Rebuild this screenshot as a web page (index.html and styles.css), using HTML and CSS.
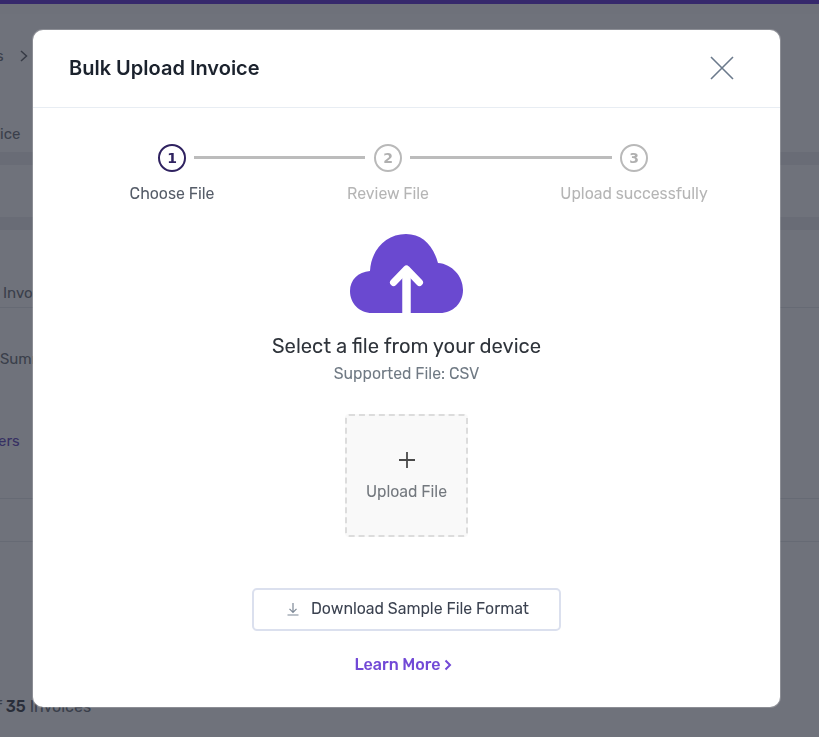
FILE: index.html
```html
<!DOCTYPE html>
<html lang="en">
<head>
<meta charset="utf-8">
<title>Bulk Upload Invoice</title>
<link rel="stylesheet" href="styles.css">
</head>
<body>
<div class="page">
  <div class="topbar"></div>
  <div class="subbar"></div>
  <div class="head-band">
    <div class="crumb"><span>s</span><svg width="8" height="12" viewBox="0 0 8 12" fill="none" stroke="#7d8087" stroke-width="1.500"><path d="M1 1l5.500 5L1 11"/></svg></div>
    <div class="page-title">ice</div>
  </div>
  <div class="gap"></div>
  <div class="card-band"></div>
  <div class="gap"></div>
  <div class="row row-a"><span>Invoices</span></div>
  <div class="row row-b">
    <div class="summary">Summary</div>
    <div class="link">ers</div>
  </div>
  <div class="row row-d"></div>
  <div class="row row-e"><span>f <b>35</b> Invoices</span></div>
</div>

<div class="overlay">
  <section class="modal">
    <header class="modal-head">
      <h1 class="modal-title">Bulk Upload Invoice</h1>
      <svg class="close" width="26" height="26" viewBox="0 0 26 26" fill="none" stroke="#6b7a8c" stroke-width="1.600"><path d="M2 2l22 22M24 2L2 24"/></svg>
    </header>
    <div class="modal-body">
      <div class="steps">
        <div class="step step-active"><span class="num">1</span><span class="label">Choose File</span></div>
        <div class="line line-one"></div>
        <div class="step"><span class="num">2</span><span class="label">Review File</span></div>
        <div class="line line-two"></div>
        <div class="step"><span class="num">3</span><span class="label">Upload successfully</span></div>
      </div>
      <svg class="cloud" width="114" height="80" viewBox="0 0 114 80">
        <path fill="#6a49d0" d="M22 79C9 79 0 69 0 57 0 46 8 38 20 37 21 16 36 0 56 0 72 0 83 11 88 29 102 30 113 42 113 56 113 69 103 79 90 79z"/>
        <path fill="none" stroke="#fff" stroke-width="8.500" d="M56.500 79V38"/>
        <path fill="none" stroke="#fff" stroke-width="7" stroke-linecap="round" stroke-linejoin="round" d="M43.500 48.500L56.500 35l13 13.500"/>
      </svg>
      <h2 class="select-title">Select a file from your device</h2>
      <p class="supported">Supported File: CSV</p>
      <div class="dropzone">
        <svg class="plus" width="16" height="16" viewBox="0 0 16 16" stroke="#4a4a4a" stroke-width="1.800"><path d="M8 0v16M0 8h16"/></svg>
        <span class="drop-label">Upload File</span>
      </div>
      <button class="download" type="button">
        <svg width="14" height="14" viewBox="0 0 14 14" fill="none" stroke="#7d8896" stroke-width="1.200"><path d="M7 1v9M3.500 6.800L7 10.300l3.500-3.500M1.500 13h11"/></svg>
        <span>Download Sample File Format</span>
      </button>
      <a class="learn" href="#">Learn More<svg width="8" height="12" viewBox="0 0 8 12" fill="none" stroke="#7249d6" stroke-width="2"><path d="M1.500 1.500L6 6l-4.500 4.500"/></svg></a>
    </div>
  </section>
</div>
</body>
</html>
```
FILE: styles.css
```css
* { box-sizing: border-box; }
html, body { margin: 0; height: 100%; }
body { font-family: Rubik, Inter, "Noto Sans", sans-serif; background: #fff; overflow: hidden; }

.page { height: 737px; background: #fdfdfe; color: #858991; font-size: 15px; line-height: 20px; overflow: hidden; }
.topbar { height: 4px; background: #7c57dc; }
.subbar { height: 10px; background: #fbfbfc; }
.head-band { height: 138px; display: flex; flex-direction: column; }
.crumb { margin: 32px 0 0 -4px; display: flex; gap: 16px; align-items: center; height: 20px; }
.page-title { margin-top: 58px; }
.gap { height: 13px; background: #eff0f3; }
.card-band { height: 52px; background: #fdfdfe; }
.row { border-bottom: 1px solid #e9ebef; }
.row-a { height: 78px; padding: 53px 0 0 3px; }
.row-b { height: 191px; padding-top: 41px; }
.summary { height: 82px; }
.link { color: #7d67c9; margin-left: -2px; }
.row-d { height: 43px; }
.row-e { padding-top: 155px; margin-left: -4px; border: 0; font-size: 16px; }
.row-e b { font-weight: 500; color: #5f636b; }

.overlay { position: fixed; inset: 0; background: rgba(0, 5, 20, .56); padding: 30px 39px 30px 33px; }
.modal { width: 747px; height: 677px; background: #fff; border-radius: 10px; display: flex; flex-direction: column; overflow: hidden; box-shadow: 0 0 0 1px rgba(255, 255, 255, .2); }
.modal-head { height: 78px; flex: none; display: flex; align-items: center; justify-content: space-between; padding: 0 45px 2px 36px; border-bottom: 1px solid #e8edf3; }
.modal-title { margin: 0; font: 600 20px/24px Inter, sans-serif; color: #1b222d; }
.modal-body { flex: 1; display: flex; flex-direction: column; align-items: center; }

.steps { display: flex; align-self: stretch; align-items: flex-start; height: 126px; padding: 36px 0 0 125px; }
.step { width: 28px; display: flex; flex-direction: column; align-items: center; flex: none; }
.num { width: 28px; height: 28px; flex: none; border-radius: 50%; border: 2px solid #b9b9b9; color: #b0b0b0; font: 700 14px/24px "DejaVu Sans", sans-serif; text-align: center; }
.label { margin-top: 12px; font-size: 15.800px; line-height: 20px; white-space: nowrap; color: #b5b5b5; }
.step-active .num { border-color: #2f2260; color: #2f2260; }
.step-active .label { color: #555c68; }
.line { height: 3px; background: #bcbcbc; margin: 12px 8px 0; flex: none; }
.line-one { width: 171px; margin-right: 9px; }
.line-two { width: 202px; }

.cloud { display: block; flex: none; }
.select-title { margin: 19px 0 0; font-size: 20.200px; font-weight: 400; line-height: 26px; color: #2f343b; }
.supported { margin: 5px 0 0; font-size: 15.800px; line-height: 20px; color: #707a84; }
.dropzone { margin-top: 30px; width: 123px; height: 123px; flex: none; background: #f9f9f9; border: 2px dashed #dcdcdc; border-radius: 4px; display: flex; flex-direction: column; align-items: center; padding-top: 36px; }
.drop-label { margin-top: 14px; font-size: 15.800px; line-height: 20px; color: #73787e; }
.download { margin-top: 51px; width: 309px; height: 43px; flex: none; background: #fff; border: 2px solid #dbe0ee; border-radius: 5px; padding: 0 0 2px 2px; display: flex; align-items: center; justify-content: center; gap: 11px; font: 400 15.800px/20px Rubik, Inter, sans-serif; color: #3b4250; }
.learn { margin-top: 24px; padding-right: 7px; font-size: 16px; font-weight: 500; line-height: 20px; color: #7249d6; text-decoration: none; display: flex; align-items: center; gap: 3px; }
```
